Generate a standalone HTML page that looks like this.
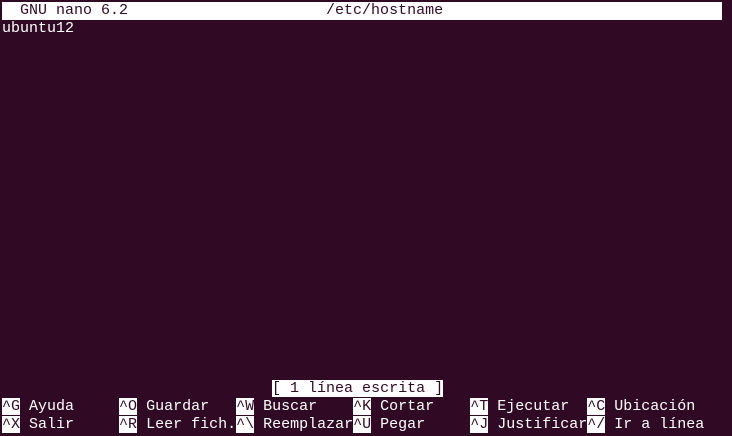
<!DOCTYPE html>
<html><head><meta charset="utf-8"><style>
html,body{margin:0;padding:0;background:#300a24;width:732px;height:436px;overflow:hidden}
.t{position:absolute;left:2px;top:2px;font-family:"Liberation Mono",monospace;font-size:15px;line-height:18px;color:#ffffff}
.r{height:18px;position:relative;white-space:pre}
.i{background:#ffffff;color:#300a24}
</style></head><body>
<div class="t"><div class="r i" style="width:720px">  GNU nano 6.2                      /etc/hostname</div><div class="r">ubuntu12</div><div style="height:342px"></div><div class="r">                              <span class="i">[ 1 línea escrita ]</span></div><div class="r"><span class="i">^G</span> Ayuda     <span class="i">^O</span> Guardar   <span class="i">^W</span> Buscar    <span class="i">^K</span> Cortar    <span class="i">^T</span> Ejecutar  <span class="i">^C</span> Ubicación</div><div class="r"><span class="i">^X</span> Salir     <span class="i">^R</span> Leer fich.<span class="i">^\</span> Reemplazar<span class="i">^U</span> Pegar     <span class="i">^J</span> Justificar<span class="i">^/</span> Ir a línea</div></div>
</body></html>
